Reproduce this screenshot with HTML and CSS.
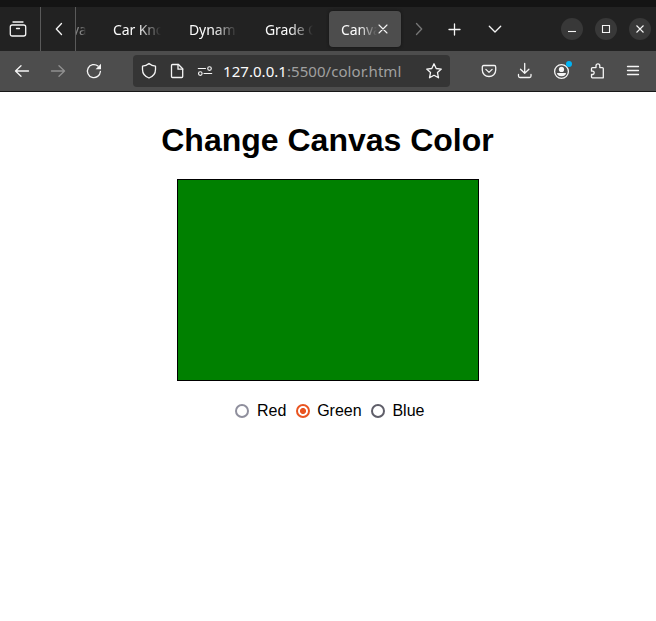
FILE: index.html
```html
<!DOCTYPE html>
<html lang="en">
<head>
<meta charset="utf-8">
<title>Canvas Color</title>
<link rel="stylesheet" href="styles.css">
</head>
<body>
<div class="browser">
  <div class="tabbar">
    <div class="cell view"><svg width="18" height="18" viewBox="0 0 18 18"><path d="M4 2h10M3.300 5h11.400q2 0 2 2v7q0 2-2 2H3.300q-2 0-2-2V7q0-2 2-2zM7.500 8.500h3"/></svg></div>
    <div class="cell prev"><svg width="18" height="18" viewBox="0 0 18 18"><path d="M11.500 3.500 6.300 9l5.200 5.500"/></svg></div>
    <div class="tabs">
      <div class="tab cut"><span class="label">va</span></div>
      <div class="tab"><span class="label">Car Kno</span></div>
      <div class="tab"><span class="label">Dynami</span></div>
      <div class="tab"><span class="label">Grade C</span></div>
      <div class="tab active"><span class="label">Canva</span><svg class="close" width="12" height="12" viewBox="0 0 12 12"><path d="m2 2 8 8M10 2l-8 8"/></svg></div>
    </div>
    <div class="cell next"><svg width="18" height="18" viewBox="0 0 18 18"><path d="M6.500 3.500 11.700 9l-5.200 5.500"/></svg></div>
    <div class="cell add"><svg width="18" height="18" viewBox="0 0 18 18"><path d="M8.500 4v11M3 9.500h11"/></svg></div>
    <div class="cell list"><svg width="18" height="18" viewBox="0 0 18 18"><path d="m3.300 6.300 5.700 5.700 5.700-5.700"/></svg></div>
    <div class="window">
      <span class="round"><svg width="22" height="22" viewBox="0 0 22 22"><path d="M7 13.500h8"/></svg></span>
      <span class="round"><svg width="22" height="22" viewBox="0 0 22 22"><path d="M7.500 7.500h7v7h-7z"/></svg></span>
      <span class="round"><svg width="22" height="22" viewBox="0 0 22 22"><path d="m7.500 7.500 7 7M14.500 7.500l-7 7"/></svg></span>
    </div>
  </div>
  <div class="toolbar">
    <div class="tool"><svg width="18" height="18" viewBox="0 0 18 18"><path d="M15.500 9H2.500M8 3.700 2.500 9 8 14.300"/></svg></div>
    <div class="tool dim"><svg width="18" height="18" viewBox="0 0 18 18"><path d="M2.500 9h13M10 3.700 15.500 9 10 14.300"/></svg></div>
    <div class="tool"><svg width="18" height="18" viewBox="0 0 18 18"><path d="M15.400 9.500A6.500 6.500 0 1 1 13 4"/><path class="solid" d="M16 1.800v5.400h-5.400z"/></svg></div>
    <div class="address">
      <svg width="18" height="18" viewBox="0 0 18 18"><path d="M9 1.500c2 1.700 4 2.500 6.500 2.700v3.300c0 3.800-2.500 7-6.500 8.500-4-1.500-6.500-4.700-6.500-8.500V4.200C5 4 7 3.200 9 1.500z"/></svg>
      <svg class="page" width="18" height="18" viewBox="0 0 18 18"><path d="M4.500 2.500h6l4.200 4.200v7.800q0 1-1 1H4.500q-1 0-1-1v-11q0-1 1-1z"/><path d="M10 2.500v4.700h4.700"/></svg>
      <svg class="perm" width="18" height="18" viewBox="0 0 18 18"><path d="M2.300 6.500h7.200M8 11.500h7.700"/><circle cx="13.500" cy="6.500" r="1.800"/><circle cx="4.300" cy="11.500" r="1.800"/></svg>
      <span class="url">127.0.0.1<span class="path">:5500/color.html</span></span>
      <svg class="star" width="18" height="18" viewBox="0 0 18 18"><path d="m9 1.800 2.200 4.700 5.100.6-3.800 3.500 1 5.200L9 13.300l-4.500 2.500 1-5.200-3.800-3.500 5.100-.6z"/></svg>
    </div>
    <div class="tool"><svg width="18" height="18" viewBox="0 0 18 18"><path d="M3.800 3.500h10.400q1.500 0 1.500 1.500v3c0 4-3 6.500-6.700 6.500S2.300 12 2.300 8V5q0-1.500 1.500-1.500z"/><path d="m5.900 7.400 3.100 3 3.100-3"/></svg></div>
    <div class="tool"><svg width="18" height="18" viewBox="0 0 18 18"><path d="M8.700 1.500V11M4.500 7.200l4.200 4 4.200-4M2.500 12.500V14q0 1.500 1.500 1.500h9.500q1.500 0 1.500-1.500v-1.500"/></svg></div>
    <div class="tool account"><svg width="18" height="18" viewBox="0 0 18 18"><circle cx="9.500" cy="9.500" r="6.900"/><circle class="solid" cx="9.500" cy="7.400" r="2.600"/><path class="solid" d="M5 11h9q0 3-4.500 3.200Q5 14 5 11z"/></svg><i class="dot"></i></div>
    <div class="tool"><svg width="18" height="18" viewBox="0 0 18 18"><path d="M3.500 9.200V6.600q0-1 1-1H8V3.800a1.900 1.900 0 0 1 3.800 0v1.800h2.500q1 0 1 1v9.200h-11q-.8 0-.8-1v-2.300h1.400a1.700 1.700 0 0 0 0-3.300z"/></svg></div>
    <div class="tool"><svg width="18" height="18" viewBox="0 0 18 18"><path d="M3.500 4.500h11M3.500 8.500h11M3.500 12.500h11"/></svg></div>
  </div>
</div>
<main>
  <h1>Change Canvas Color</h1>
  <canvas class="canvas" width="300" height="200"></canvas>
  <div class="choices">
    <label><input class="muted" type="radio" name="color" value="red">Red</label>
    <label><input type="radio" name="color" value="green" checked>Green</label>
    <label><input type="radio" name="color" value="blue">Blue</label>
  </div>
</main>
</body>
</html>
```
FILE: styles.css
```css
* { box-sizing: border-box; }
body { margin: 0; background: #fff; color: #000; font: 16px "Liberation Sans", Arial, sans-serif; overflow: hidden; }
.browser { height: 92px; border-top: 7px solid #141414; border-bottom: 1px solid #171717; font-family: "Noto Sans", sans-serif; color: #fbfbfb; }
svg { display: block; flex: none; fill: none; stroke: #f5f5f5; stroke-width: 1.3; stroke-linecap: round; stroke-linejoin: round; }
.solid { fill: #f5f5f5; stroke: none; }
.tabbar { display: flex; height: 44px; background: #222; }
.cell { display: flex; align-items: center; justify-content: center; flex: none; }
.view { width: 41px; padding-right: 4px; border-right: 1px solid #5a5a5a; }
.prev { width: 35px; border-right: 1px solid #5a5a5a; padding-left: 2px; }
.tabs { display: flex; gap: 4px; width: 325px; padding: 4px 0; }
.tab { width: 72px; height: 36px; flex: none; display: flex; align-items: center; padding-left: 12px; border-radius: 4px; font-size: 14px; }
.label { width: 48px; margin-top: 2px; overflow: hidden; white-space: nowrap; line-height: 22px; letter-spacing: -.1px; -webkit-mask-image: linear-gradient(90deg, #000 52%, transparent); mask-image: linear-gradient(90deg, #000 52%, transparent); }
.cut { width: 21px; padding: 0; }
.cut .label { width: 10px; text-indent: -4px; opacity: .45; }
.active { background: #4d4d4d; box-shadow: 0 0 3px #111; }
.active .label { width: 36px; }
.close { stroke-width: 1.1; }
.next { width: 36px; }
.next svg { stroke: #777; }
.add { width: 36px; }
.list { width: 44px; }
.window { display: flex; align-items: center; gap: 12px; margin-left: 44px; }
.round { width: 22px; height: 22px; border-radius: 50%; background: #383838; }
.round svg { stroke-width: 1.1; stroke-linecap: butt; stroke-linejoin: miter; }
.toolbar { display: flex; align-items: center; height: 40px; padding: 0 5px 0 4px; background: #4d4d4d; }
.tool { width: 36px; height: 40px; flex: none; display: flex; align-items: center; justify-content: center; }
.dim { opacity: .4; }
.address { display: flex; align-items: center; width: 317px; height: 32px; margin: 0 21px; padding: 0 7px; border-radius: 4px; background: #353535; }
.page { margin-left: 10px; }
.perm { margin-left: 10px; stroke-width: 1.15; }
.url { margin-left: 9px; font-size: 15px; line-height: 22px; letter-spacing: .05px; white-space: nowrap; }
.path { color: #a0a0a0; }
.star { margin-left: auto; }
.account { position: relative; }
.dot { position: absolute; left: 23px; top: 10px; width: 6px; height: 6px; border-radius: 50%; background: #00b3f4; }
main { display: flex; flex-direction: column; align-items: center; padding-top: 30px; }
h1 { margin: 0 1px 20px 0; font-size: 32px; line-height: 37px; }
.canvas { display: block; box-sizing: content-box; border: 1px solid #000; background: #008000; }
.choices { display: flex; gap: 9.300px; margin: 20px 0 0 4px; line-height: 20px; }
label { display: flex; align-items: center; gap: 7.500px; }
input { appearance: none; width: 14px; height: 14px; margin: 0; border: 2px solid #5f5e69; border-radius: 50%; background: #fff; }
input.muted { margin: 0 .7px 0 -.7px; border-color: #8f8f9d; }
input:checked { border-color: #e95420; background: radial-gradient(circle, #e95420 2.7px, #fff 3.3px); }
```
